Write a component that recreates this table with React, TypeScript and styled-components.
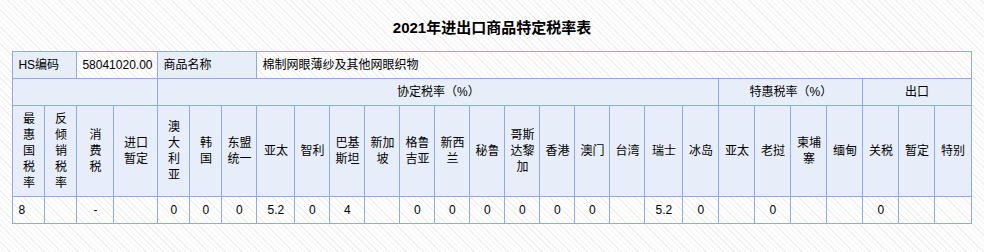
import React from "react";
import styled, { createGlobalStyle } from "styled-components";

const colors = {
    border: "#8fabe6",
    head: "#e8eef9",
    text: "#000",
};

const GlobalStyle = createGlobalStyle`
    html, body {
        margin: 0;
        padding: 0;
    }
    body {
        background: repeating-linear-gradient(
            45deg,
            #ffffff 0px,
            #ffffff 3px,
            #efefef 3px,
            #efefef 4px
        );
        font-family: "Liberation Sans", "Noto Sans CJK SC", sans-serif;
        color: ${colors.text};
        min-height: 252px;
    }
`;

const Page = styled.div`
    display: flex;
    flex-direction: column;
    align-items: center;
    padding-top: 18px;
`;

const Title = styled.h1`
    margin: 0 0 13px;
    font-size: 15px;
    line-height: 20px;
    font-weight: bold;
    font-family: "Liberation Sans", "Noto Sans CJK SC", sans-serif;
`;

const RateTable = styled.table`
    border-collapse: collapse;
    table-layout: fixed;
    width: 959px;
    border: 1px solid ${colors.border};
`;

const Row = styled.tr<{ $height: number }>`
    height: ${(p) => p.$height}px;
`;

const Cell = styled.td<{ $head?: boolean; $align?: "left" | "center" }>`
    border: 1px solid ${colors.border};
    background: ${(p) => (p.$head ? colors.head : "transparent")};
    text-align: ${(p) => p.$align || "center"};
    padding: ${(p) => (p.$align === "left" ? "0 5px" : "0")};
    font-size: 12px;
    line-height: 16px;
    white-space: nowrap;
    overflow: hidden;
    vertical-align: middle;
`;

const widths = [
    32, 32, 37, 44, 32, 32, 35, 38, 35, 35, 35, 35, 35, 35, 35, 35, 35, 35,
    38, 36, 36, 36, 36, 36, 36, 36, 36,
];

const headers = [
    ["最", "惠", "国", "税", "率"],
    ["反", "倾", "销", "税", "率"],
    ["消", "费", "税"],
    ["进口", "暂定"],
    ["澳", "大", "利", "亚"],
    ["韩", "国"],
    ["东盟", "统一"],
    ["亚太"],
    ["智利"],
    ["巴基", "斯坦"],
    ["新加", "坡"],
    ["格鲁", "吉亚"],
    ["新西", "兰"],
    ["秘鲁"],
    ["哥斯", "达黎", "加"],
    ["香港"],
    ["澳门"],
    ["台湾"],
    ["瑞士"],
    ["冰岛"],
    ["亚太"],
    ["老挝"],
    ["柬埔", "寨"],
    ["缅甸"],
    ["关税"],
    ["暂定"],
    ["特别"],
];

const values = [
    "8", "", "-", "", "0", "0", "0", "5.2", "0", "4", "", "0", "0", "0",
    "0", "0", "0", "", "5.2", "0", "", "0", "", "", "0", "", "",
];

const App = (): JSX.Element => {
    return (
        <React.Fragment>
            <GlobalStyle />
            <Page>
                <Title>2021年进出口商品特定税率表</Title>
                <RateTable>
                    <colgroup>
                        {widths.map((w, i) => (
                            <col key={i} style={{ width: w }} />
                        ))}
                    </colgroup>
                    <tbody>
                        <Row $height={27}>
                            <Cell $head $align="left" colSpan={2}>
                                HS编码
                            </Cell>
                            <Cell $align="left" colSpan={2}>
                                58041020.00
                            </Cell>
                            <Cell $head $align="left" colSpan={3}>
                                商品名称
                            </Cell>
                            <Cell $align="left" colSpan={20}>
                                棉制网眼薄纱及其他网眼织物
                            </Cell>
                        </Row>
                        <Row $height={27}>
                            <Cell $head colSpan={4}></Cell>
                            <Cell $head colSpan={16}>
                                协定税率（%）
                            </Cell>
                            <Cell $head colSpan={4}>
                                特惠税率（%）
                            </Cell>
                            <Cell $head colSpan={3}>
                                出口
                            </Cell>
                        </Row>
                        <Row $height={91}>
                            {headers.map((lines, i) => (
                                <Cell $head key={i}>
                                    {lines.map((l, j) => (
                                        <React.Fragment key={j}>
                                            {j > 0 ? <br /> : null}
                                            {l}
                                        </React.Fragment>
                                    ))}
                                </Cell>
                            ))}
                        </Row>
                        <Row $height={27}>
                            {values.map((v, i) => (
                                <Cell key={i} $align={i === 0 ? "left" : "center"}>
                                    {v}
                                </Cell>
                            ))}
                        </Row>
                    </tbody>
                </RateTable>
            </Page>
        </React.Fragment>
    );
};

export default App;
